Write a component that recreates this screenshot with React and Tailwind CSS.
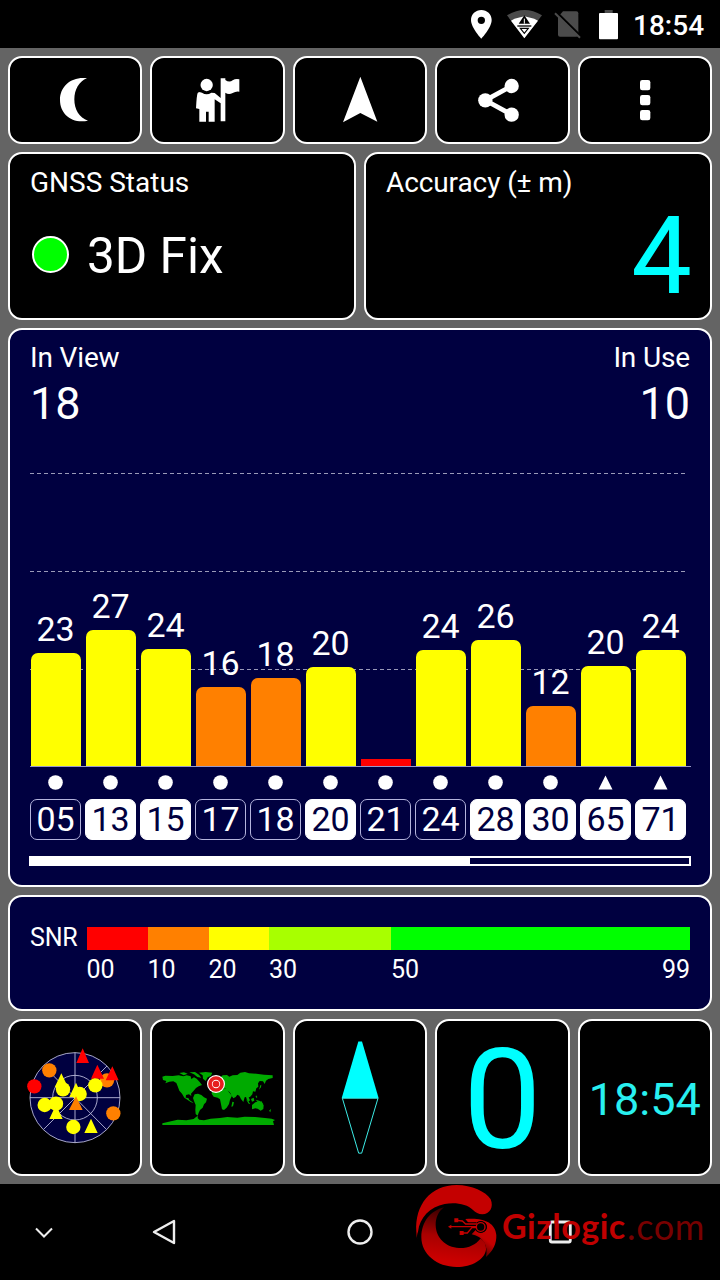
import React from 'react';
import clsx from 'clsx';

// ─── Satellite data ───────────────────────────────────────────────────────────

const SATELLITES = [
  { id: '05', snr: 23, height: 113, used: false },
  { id: '13', snr: 27, height: 136, used: true },
  { id: '15', snr: 24, height: 117, used: true },
  { id: '17', snr: 16, height: 79, used: false },
  { id: '18', snr: 18, height: 88.5, used: false },
  { id: '20', snr: 20, height: 99, used: true },
  { id: '21', snr: null, height: 7, used: false },
  { id: '24', snr: 24, height: 116.5, used: false },
  { id: '28', snr: 26, height: 126.5, used: true },
  { id: '30', snr: 12, height: 60.5, used: true },
  { id: '65', snr: 20, height: 100.5, used: true, glonass: true },
  { id: '71', snr: 24, height: 116.5, used: true, glonass: true },
];

const SCALE = [
  { label: '00', box: 'w-[61px]', color: 'bg-[#ff0000]' },
  { label: '10', box: 'w-[61px]', color: 'bg-[#ff8000]' },
  { label: '20', box: 'w-[60.5px]', color: 'bg-[#ffff00]' },
  { label: '30', box: 'w-[122px]', color: 'bg-[#a8ff00]' },
  { label: '50', box: 'flex-1', color: 'bg-[#00ff00]' },
];

const barColor = (snr) => {
  if (snr === null) return 'bg-[#ff0000]';
  return snr < 20 ? 'bg-[#ff8000]' : 'bg-[#ffff00]';
};

function Card({ className, children }) {
  return (
    <div className={clsx('rounded-[14px] border-2 border-white', className)}>{children}</div>
  );
}

function StatusBar() {
  return (
    <header className="flex h-12 items-center bg-black pl-[470px]">
      <svg className="h-[34px] w-[23px]" viewBox="32 20 69 102" fill="#fff" aria-hidden="true">
        <path
          fillRule="evenodd"
          d="M66 29c-17 0-31 13-31 30 0 23 31 56 31 56s31-33 31-56c0-17-14-30-31-30zm0 20a11 11 0 1 1 0 22 11 11 0 0 1 0-22z"
        />
      </svg>
      <svg className="ml-[13px] h-[34px] w-[37px]" viewBox="140 20 111 102" aria-hidden="true">
        <path d="M143 45q52-32 105 0l-53 69z" fill="#4b4b4b" />
        <path d="M155 61q10-7 22-9l18-4 18 4q12 2 23 9l-41 53z" fill="#fff" />
        <path d="M195 45l17 25h-34z" fill="#000" />
        <path d="M195 55v15" stroke="#fff" strokeWidth="3" />
        <path d="M174 77h42" stroke="#000" strokeWidth="4" />
        <path d="M183 84h24l-12 15z" fill="none" stroke="#000" strokeWidth="3.5" />
      </svg>
      <svg className="ml-[10px] h-[34px] w-[28px]" viewBox="280 20 84 102" aria-hidden="true">
        <path d="M310 33h40q6 0 6 6v64q0 6-6 6h-49q-6 0-6-6V50z" fill="#4b4b4b" />
        <path d="M290 35l74 73" stroke="#000" strokeWidth="7" />
        <path d="M286 39l75 73" stroke="#4b4b4b" strokeWidth="6" />
      </svg>
      <svg className="ml-[17px] h-[34px] w-[21px]" viewBox="414 20 63 102" aria-hidden="true">
        <path d="M434 29h24v10h-24z" fill="#4b4b4b" />
        <rect x="417" y="38" width="57" height="79" rx="3" fill="#fff" />
      </svg>
      <span className="ml-[14px] pt-[3px] text-[28px] leading-[48px] font-medium">18:54</span>
    </header>
  );
}

function Toolbar() {
  const card = 'flex h-[88px] items-center justify-center bg-black';
  const icon = 'size-[50px] fill-white';
  return (
    <div className="grid grid-cols-5 gap-2">
      <Card className={card}>
        <svg className={icon} viewBox="151 81 150 150" aria-hidden="true">
          <path d="M262 91c-46-6-81 23-81 65s35 72 84 62c-26-8-41-34-41-64 0-29 14-54 38-63z" />
        </svg>
      </Card>
      <Card className={card}>
        <svg className={icon} viewBox="578 81 150 150" aria-hidden="true">
          <circle cx="619" cy="111" r="18.5" />
          <path d="M597 132l8 2q14 9 28 0l10 1 18 15V91h14v5q12 9 22 1 9-6 20-3v37q-10-2-20 4-12 6-22-1v86h-14v-54l-18-12v67h-18v-30h-8v30h-20v-38l-10-2q2-40 5-46 2-3 5-2z" />
        </svg>
      </Card>
      <Card className={card}>
        <svg className={icon} viewBox="150 81 150 150" aria-hidden="true">
          <path d="M226 86l51 135-51-26-52 28z" />
        </svg>
      </Card>
      <Card className={card}>
        <svg className={icon} viewBox="577 81 150 150" aria-hidden="true">
          <path d="M681 114l-79 43 79 43" fill="none" stroke="#fff" strokeWidth="14" />
          <circle cx="602" cy="157" r="21.5" />
          <circle cx="681" cy="114" r="21.5" />
          <circle cx="681" cy="200" r="21.5" />
        </svg>
      </Card>
      <Card className={card}>
        <svg className={icon} viewBox="1004 81 150 150" aria-hidden="true">
          <rect x="1064" y="96" width="31" height="31" rx="7" />
          <rect x="1064" y="141" width="31" height="31" rx="7" />
          <rect x="1064" y="186" width="31" height="31" rx="7" />
        </svg>
      </Card>
    </div>
  );
}

function StatusCards() {
  return (
    <div className="grid grid-cols-2 gap-2">
      <Card className="h-[168px] bg-black pl-5 pt-3">
        <div className="text-[28px] leading-[33px]">GNSS Status</div>
        <div className="mt-[27px] flex items-center pl-[2px]">
          <span className="mb-1 size-[37px] rounded-full border-2 border-white bg-[#00ff00]" />
          <span className="ml-[18px] text-[49.5px] leading-[60px]">3D Fix</span>
        </div>
      </Card>
      <Card className="h-[168px] bg-black pl-5 pr-[18px] pt-3">
        <div className="text-[28px] leading-[33px] tracking-[-0.1px]">Accuracy (± m)</div>
        <div className="mt-[7px] text-right text-[108px] leading-[100px] text-[#00ffff]">4</div>
      </Card>
    </div>
  );
}

function SatelliteColumn({ sat }) {
  return (
    <div className="flex w-[51px] flex-col items-center justify-end">
      {sat.snr !== null && <span className="mb-[4px] text-[34px] leading-[40px]">{sat.snr}</span>}
      <div
        className={clsx('w-[50px]', sat.snr !== null && 'rounded-t-[7px]', barColor(sat.snr))}
        style={{ height: sat.height }}
      />
    </div>
  );
}

function SatelliteChart() {
  const grid =
    'absolute left-px h-px w-[657px] bg-[repeating-linear-gradient(90deg,#9a9ab8_0_4px,transparent_4px_7px)]';
  return (
    <Card className="h-[559px] bg-[#000040] pt-[11px] pr-[19px] pl-[19px]">
      <div className="flex justify-between pl-px pr-px">
        <div>
          <div className="text-[28px] leading-[33px] tracking-[-0.15px]">In View</div>
          <div className="mt-[5px] text-[45px] leading-[50px]">18</div>
        </div>
        <div className="text-right">
          <div className="text-[28px] leading-[33px] tracking-[-0.15px]">In Use</div>
          <div className="mt-[5px] text-[45px] leading-[50px]">10</div>
        </div>
      </div>

      {/* Bars over the dashed SNR grid */}
      <div className="relative mt-[29px] h-[309px]">
        <div className={clsx(grid, 'top-[15px]')} />
        <div className={clsx(grid, 'top-[113px]')} />
        <div className={clsx(grid, 'top-[211px]')} />
        <div className="relative ml-px flex h-full gap-1 border-b border-[#9a9ac8]">
          {SATELLITES.map((sat) => (
            <SatelliteColumn key={sat.id} sat={sat} />
          ))}
        </div>
      </div>

      <div className="ml-px flex gap-1 pt-[8px]">
        {SATELLITES.map((sat) => (
          <div key={sat.id} className="flex w-[51px] flex-col items-center">
            <svg className="size-[15px]" viewBox="0 0 15 15" fill="#fff" aria-hidden="true">
              {sat.glonass ? <path d="M7.5 0.5L14.5 14.5H0.5z" /> : <circle cx="7.5" cy="7.5" r="7.3" />}
            </svg>
            <span
              className={clsx(
                'mt-[9px] h-[41px] w-full rounded-[7px] border text-center text-[34px] leading-[39px]',
                sat.used ? 'border-white bg-white text-[#000040]' : 'border-[#b4b4dc]'
              )}
            >
              {sat.id}
            </span>
          </div>
        ))}
      </div>

      <div className="mt-[16px] h-[10px] w-[662px] border-2 border-white">
        <div className="h-full w-[439px] bg-white" />
      </div>
    </Card>
  );
}

function SnrLegend() {
  return (
    <Card className="flex h-[116px] bg-[#000040] pt-[30px] pr-5 pl-5 text-[25px]">
      <span className="w-[56.5px] leading-[22px] tracking-[-0.2px]">SNR</span>
      <div className="flex flex-1">
        {SCALE.map((step) => (
          <div key={step.label} className={step.box}>
            <div className={clsx('h-[23px]', step.color)} />
            <div className="flex justify-between leading-[40px]">
              <span>{step.label}</span>
              {step.label === '50' && <span>99</span>}
            </div>
          </div>
        ))}
      </div>
    </Card>
  );
}

// Small sky map with every satellite in view
function SkyPlot() {
  return (
    <svg className="size-[100px]" viewBox="76 98 300 300" aria-hidden="true">
      <g fill="#000040" stroke="#c8c8e6" strokeWidth="2.5">
        <circle cx="226" cy="247" r="135" />
        <circle cx="226" cy="247" r="67" />
        <path d="M91 247h270M226 112v270M132 342L322 152M148 168l172 174" />
      </g>
      <g fill="#ff8000">
        <circle cx="149" cy="165" r="21.5" />
        <circle cx="322" cy="195" r="21.5" />
        <circle cx="341" cy="294" r="21.5" />
      </g>
      <g fill="#ff0000">
        <circle cx="104" cy="213" r="21.5" />
        <path d="M249 99l19 44h-38zM293 148l20 42h-39zM338 153l19 42h-39z" />
      </g>
      <g fill="#ffff00">
        <circle cx="190" cy="222" r="21.5" />
        <circle cx="287" cy="210" r="21.5" />
        <circle cx="240" cy="236" r="21.5" />
        <circle cx="135" cy="269" r="21.5" />
        <circle cx="169" cy="265" r="21.5" />
        <circle cx="221" cy="335" r="21.5" />
        <path d="M185 174l20 42h-40zM229 202l20 43h-40zM169 268l20 43h-40zM274 310l20 43h-40z" />
      </g>
      <path d="M229 243l20 41h-41z" fill="#ff8000" />
    </svg>
  );
}

function WorldMap() {
  return (
    <svg className="h-[60px] w-[120px]" viewBox="24 84 360 180" aria-hidden="true">
      <g fill="#00aa00">
        <path d="M37 110l9-3 22 1 18-2 14 3 10-3 12 3 2 8 8-5 8 4 9 10 7 9-10 4-8 5-7 8-8 9 1 7-7-5-9 2-1 8 8 1 3 6 8 5 5 5-9-4-10-7-9-6-7-12-8-9-5-13-4-10-9-5-12 1-12 5 3-7-10-3z" />
        <path d="M88 99l14-2 11 4-12 5zM118 97l17-1 12 8 7 9-12-2-10-8zM147 98l20-2 20 2-4 9-10 5-6 11-8-7-1-10z" />
        <path d="M134 163l10-2 10 4 8 7 9 4-3 11-6 6-4 10-8 7-4 8-3 9-6-5-1-12 1-15-5-12-3-9z" />
        <path d="M186 154l8-10 12-3 11 5 13-1 7 12 9 10-6 12-3 13-7 11-8 7-6-2-3-15-3-15-7-5-12-3-6-9zM247 185l5 2-3 12-5 1z" />
        <path d="M187 139l5-9 9-5 7-11 10-8 13-1 7 5 10-4 14-1 9-7 14-2 12 4 22 1 23 3 26 2v8l-13 3-7 5-4 10-5-8-10-1-5 7 1 10-6 5-3 10-7-1-2 9-7 8-4 1 4 9-5 4-5-8-2-6-4 1-4 14-7-9-5-10-6-3-5 7-7 4-6-9-3-7-5-5-5-3-4-6-7 1-6 7-7-7-7 4-6 5z" />
        <path d="M288 178l6 4 7 10-5-1zM303 177l8-4 2 9-7 3zM317 179l13 4 10 8-14-2zM327 149l6-7 1-8-3 2zM318 166l4 5-2 3-3-4z" />
        <path d="M306 195l10-8 9-3 4 5 5-6 7 13-1 11-8 5-9-6-7-1-10 3zM357 212l6-5-2 10zM192 119l4-6 4 9-5 3z" />
        <path d="M37 255v-5l26-6 20-5 26 2 22-4 8-7 5-2-1 6 5 5 14 2 20-5 28-2 22-3 30 2 22-3 31 1 30 3 20 2 10 4-6 4 3 11z" />
      </g>
      <circle cx="198" cy="132" r="27" fill="#fff" />
      <circle cx="198" cy="132" r="18" fill="#fff" stroke="#e61e1e" strokeWidth="11" />
      <circle cx="198" cy="132" r="10" fill="#e61e1e" />
    </svg>
  );
}

function BottomTiles() {
  const card = 'flex h-[157px] items-center justify-center bg-black text-[#00ffff]';
  return (
    <div className="grid grid-cols-5 gap-2">
      <Card className={card}>
        <SkyPlot />
      </Card>
      <Card className={card}>
        <WorldMap />
      </Card>
      <Card className={card}>
        <svg className="h-[120px] w-[40px]" viewBox="165 67.5 120 360" aria-hidden="true">
          <path d="M220 78h11l50 170H170z" fill="#00ffff" />
          <path d="M172 248h107l-49 165h-9z" fill="none" stroke="#3cebe6" strokeWidth="3" />
        </svg>
      </Card>
      <Card className={card}>
        <span className="pt-[5px] text-[140px] leading-none">0</span>
      </Card>
      <Card className={card}>
        <span className="pt-[3px] text-[45px] leading-[53px] text-[#28f0f0]">18:54</span>
      </Card>
    </div>
  );
}

function Watermark() {
  return (
    <div className="absolute top-0 left-[412px] flex h-24">
      <svg className="-mt-[1px] h-[88px] w-[88px]" viewBox="36 24 264 264" aria-hidden="true">
        <defs>
          <linearGradient id="swirl" x1="0.35" y1="1" x2="0.5" y2="0">
            <stop offset="0.1" stopColor="#cc0000" />
            <stop offset="0.5" stopColor="#a80000" />
            <stop offset="1" stopColor="#300000" />
          </linearGradient>
          <linearGradient id="tail" x1="1" y1="0.2" x2="0.5" y2="1">
            <stop offset="0.5" stopColor="#c40000" />
            <stop offset="1" stopColor="#400000" />
          </linearGradient>
        </defs>
        <path
          d="M49 170C44 90 92 30 170 30c45 0 88 20 102 43 10 24-3 45-25 45-12 0-20-6-28-13-18-19-55-24-85-18-44 9-75 40-80 83-3 6-4 16-2 24-2-8-3-16-3-24z"
          fill="#c40000"
        />
        <path
          d="M132 97C92 107 64 140 64 187c0 50 46 89 106 89 46 0 84-23 88-52 1-19-7-29-17-33-14 18-36 29-64 28-40-2-69-30-70-69 0-22 8-40 25-53z"
          fill="url(#swirl)"
        />
        <path
          d="M196 132c50-5 90 8 93 48 1 25-9 47-31 66 7-33-7-60-43-68l12-13c15 14 34 6 34-9 0-17-23-24-35-8h-17z"
          fill="url(#tail)"
        />
        <g fill="none" stroke="#000" strokeWidth="10">
          <path d="M175 136l12 2 10 9h32M190 155h40M190 174h12l14-16h14" />
          <circle cx="242" cy="156" r="13" />
        </g>
        <g fill="none" stroke="#c40000" strokeWidth="4">
          <path d="M150 155h80M169 136l18 2 10 9h34M185 174h17l14-16h14" />
          <circle cx="242" cy="156" r="13" />
        </g>
        <path d="M144 155l10-6v12zM163 130h12v12h-12zM179 168h12v12h-12z" fill="#c40000" />
      </svg>
      <div className="ml-[2px] flex font-[Lato,sans-serif] leading-[84px] whitespace-nowrap">
        <span className="w-[125px] text-[34px] font-bold tracking-[0.5px] text-[#c00000]">Gizlogic</span>
        <span className="text-[36px] tracking-[0.7px] text-[#780000]">.com</span>
      </div>
    </div>
  );
}

function NavBar() {
  return (
    <nav className="relative h-24 bg-black">
      <div className="flex h-full items-center pl-[32px]">
        <svg className="size-6" viewBox="0 0 24 24" fill="none" stroke="#eee" strokeWidth="2">
          <path d="M4 8.5l8 8 8-8" />
        </svg>
        <svg className="ml-[94px] size-7" viewBox="0 0 28 28" fill="none" stroke="#eee" strokeWidth="2.4">
          <path d="M24 3v22L4 14z" strokeLinejoin="round" />
        </svg>
        <svg className="ml-[168px] size-7" viewBox="0 0 28 28" fill="none" stroke="#eee" strokeWidth="2.4">
          <circle cx="14" cy="14" r="11.5" />
        </svg>
        <svg className="ml-[172px] size-7" viewBox="0 0 28 28" fill="none" stroke="#eee" strokeWidth="2.8">
          <rect x="4.3" y="4" width="20" height="20" rx="1.5" />
        </svg>
      </div>
      <Watermark />
    </nav>
  );
}

export default function App() {
  return (
    <div className="h-[1280px] w-[720px] overflow-hidden bg-[#646464] font-[Roboto,sans-serif] text-white">
      <StatusBar />
      <main className="flex h-[1136px] flex-col gap-2 p-2">
        <Toolbar />
        <StatusCards />
        <SatelliteChart />
        <SnrLegend />
        <BottomTiles />
      </main>
      <NavBar />
    </div>
  );
}
